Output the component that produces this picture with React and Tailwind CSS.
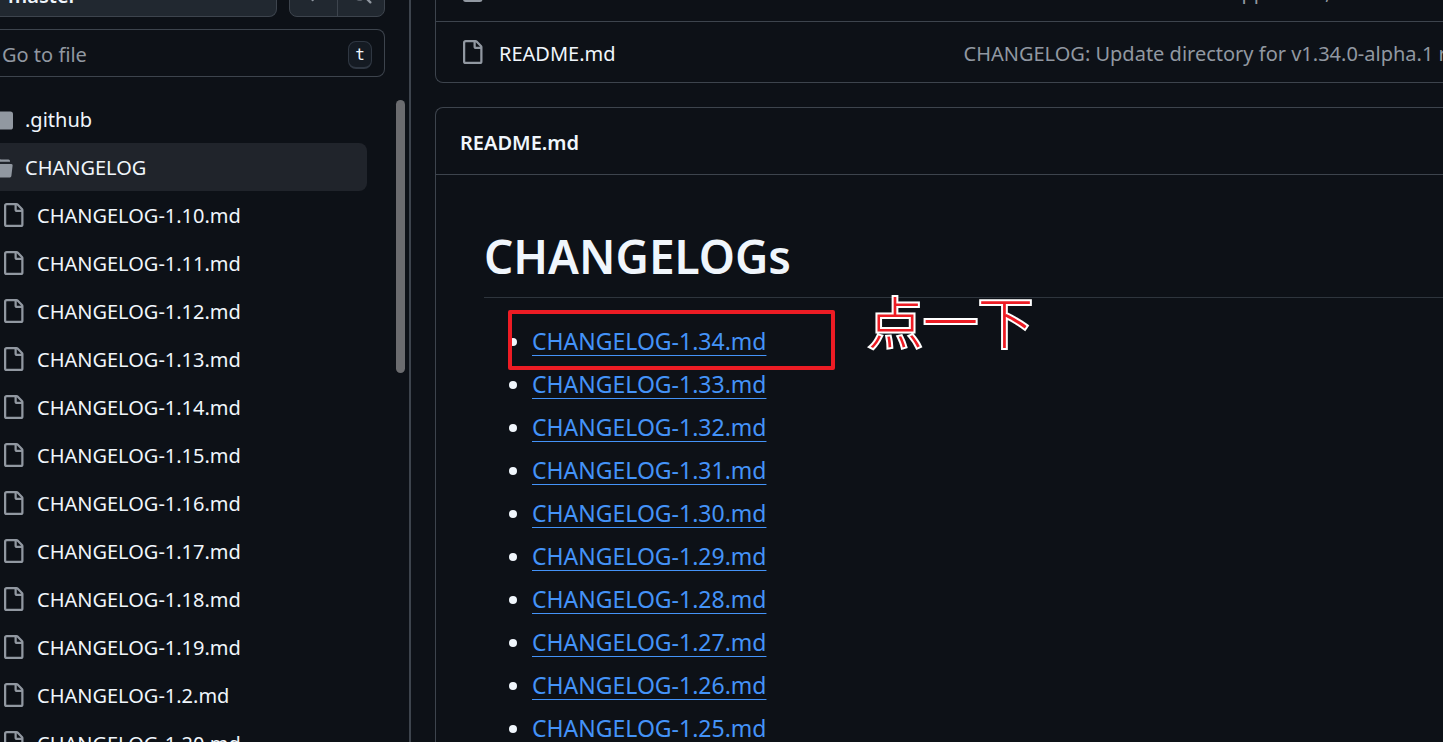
import React from 'react';

const treeFiles = [
  'CHANGELOG-1.10.md',
  'CHANGELOG-1.11.md',
  'CHANGELOG-1.12.md',
  'CHANGELOG-1.13.md',
  'CHANGELOG-1.14.md',
  'CHANGELOG-1.15.md',
  'CHANGELOG-1.16.md',
  'CHANGELOG-1.17.md',
  'CHANGELOG-1.18.md',
  'CHANGELOG-1.19.md',
  'CHANGELOG-1.2.md',
  'CHANGELOG-1.20.md',
];

const readmeLinks = [
  'CHANGELOG-1.34.md',
  'CHANGELOG-1.33.md',
  'CHANGELOG-1.32.md',
  'CHANGELOG-1.31.md',
  'CHANGELOG-1.30.md',
  'CHANGELOG-1.29.md',
  'CHANGELOG-1.28.md',
  'CHANGELOG-1.27.md',
  'CHANGELOG-1.26.md',
  'CHANGELOG-1.25.md',
];

const directoryRows = [
  { name: 'OWNERS', message: 'Move inactive release leads. approvers, reviewers' },
  { name: 'README.md', message: 'CHANGELOG: Update directory for v1.34.0-alpha.1 release' },
];

const Icon = ({ d }) => (
  <svg viewBox="0 0 16 16" className="size-6 shrink-0 fill-[#9198a1]" aria-hidden="true">
    <path d={d} />
  </svg>
);

const FileIcon = () => (
  <Icon d="M2 1.75C2 .784 2.784 0 3.75 0h6.586c.464 0 .909.184 1.237.513l2.914 2.914c.329.328.513.773.513 1.237v9.586A1.75 1.75 0 0 1 13.25 16h-9.5A1.75 1.75 0 0 1 2 14.25Zm1.75-.25a.25.25 0 0 0-.25.25v12.5c0 .138.112.25.25.25h9.5a.25.25 0 0 0 .25-.25V6h-2.75A1.75 1.75 0 0 1 9 4.25V1.5Zm6.75.062V4.25c0 .138.112.25.25.25h2.688l-.011-.013-2.914-2.914-.013-.011Z" />
);

const FolderIcon = () => (
  <Icon d="M1.75 1A1.75 1.75 0 0 0 0 2.75v10.5C0 14.216.784 15 1.75 15h12.5A1.75 1.75 0 0 0 16 13.25v-8.5A1.75 1.75 0 0 0 14.25 3H7.5a.25.25 0 0 1-.2-.1l-.9-1.2C6.07 1.26 5.55 1 5 1H1.75Z" />
);

const OpenFolderIcon = () => (
  <Icon d="M.513 1.513A1.75 1.75 0 0 1 1.75 1h3.5c.55 0 1.07.26 1.4.7l.9 1.2a.25.25 0 0 0 .2.1H13a1 1 0 0 1 1 1v.5H2.75a.75.75 0 0 0 0 1.5h11.978a1 1 0 0 1 .994 1.117L15 13.25A1.75 1.75 0 0 1 13.25 15H1.75A1.75 1.75 0 0 1 0 13.25V2.75c0-.464.184-.91.513-1.237Z" />
);

const PlusIcon = () => (
  <Icon d="M7.75 2a.75.75 0 0 1 .75.75V7h4.25a.75.75 0 0 1 0 1.5H8.5v4.25a.75.75 0 0 1-1.5 0V8.5H2.75a.75.75 0 0 1 0-1.5H7V2.75A.75.75 0 0 1 7.75 2Z" />
);

const SearchIcon = () => (
  <Icon d="M10.68 11.74a6 6 0 0 1-7.922-8.982 6 6 0 0 1 8.982 7.922l3.04 3.04a.749.749 0 0 1-.326 1.275.749.749 0 0 1-.734-.215ZM11.5 7a4.499 4.499 0 1 0-8.997 0A4.499 4.499 0 0 0 11.5 7Z" />
);

const Sidebar = () => (
  <aside className="relative w-[411px] shrink-0 overflow-hidden border-r-2 border-[#3d444d]">
    <div className="-mt-8 pr-6">
      {/* Branch picker and tree actions */}
      <div className="flex gap-3">
        <button
          type="button"
          className="h-[49px] flex-1 rounded-r-lg border border-l-0 border-[#3d444d] bg-[#212830] pt-1.5 pl-2 text-left font-semibold"
        >
          master
        </button>
        <div className="flex h-[49px] w-24 divide-x divide-[#3d444d] overflow-hidden rounded-lg border border-[#3d444d] bg-[#212830]">
          <button type="button" aria-label="Add file" className="flex flex-1 items-center justify-center">
            <PlusIcon />
          </button>
          <button type="button" aria-label="Search this repository" className="flex flex-1 items-center justify-center">
            <SearchIcon />
          </button>
        </div>
      </div>

      {/* File filter */}
      <div className="mt-3 flex h-12 items-center rounded-r-lg border border-l-0 border-[#3d444d] pt-1 pr-3">
        <input
          type="text"
          aria-label="Go to file"
          placeholder="Go to file"
          className="min-w-0 flex-1 bg-transparent pl-0.5 outline-none placeholder:text-[#9198a1]"
        />
        <kbd className="flex h-7 w-6 items-center justify-center rounded-lg border border-b-2 border-[#2f3742] bg-[#151b23] font-['DejaVu_Sans_Mono',monospace] text-base">
          t
        </kbd>
      </div>
    </div>

    {/* File tree */}
    <ul className="-ml-[11px] mt-[18px] mr-[42px]">
      <li className="flex h-12 items-center gap-3">
        <FolderIcon />
        <span className="pt-0.5">.github</span>
      </li>
      <li>
        <div className="flex h-12 items-center gap-3 rounded-lg bg-[#20242b]">
          <OpenFolderIcon />
          <span className="pt-0.5">CHANGELOG</span>
        </div>
        <ul className="pl-3">
          {treeFiles.map((name) => (
            <li key={name} className="flex h-12 items-center gap-3">
              <FileIcon />
              <span className="pt-0.5">{name}</span>
            </li>
          ))}
        </ul>
      </li>
    </ul>

    {/* Scrollbar thumb */}
    <div className="absolute top-[100px] right-1 h-[273px] w-[9px] rounded-full bg-[#6b6c6f]" />
  </aside>
);

const DirectoryTable = () => (
  <div className="-mt-10 rounded-bl-lg border-b border-l border-[#3d444d]">
    <table className="w-full table-fixed">
      <tbody className="divide-y divide-[#3d444d]">
        {directoryRows.map((row) => (
          <tr key={row.name} className="h-[61px]">
            <td className="w-1/2 px-6">
              <div className="flex items-center gap-[15px]">
                <FileIcon />
                <span className="pt-1">{row.name}</span>
              </div>
            </td>
            <td className="overflow-hidden pt-1 pl-6 whitespace-nowrap text-[#9198a1]">{row.message}</td>
          </tr>
        ))}
      </tbody>
    </table>
  </div>
);

const Readme = () => (
  <section className="mt-6 rounded-tl-lg border-t border-l border-[#3d444d]">
    <h2 className="flex h-[67px] items-center border-b border-[#3d444d] px-6 pt-1 font-semibold">README.md</h2>
    <article className="py-12 pl-12">
      <h1 className="border-b border-[#2e353d] pb-2 text-[46px] leading-[66px] font-semibold">CHANGELOGs</h1>
      <div className="relative mt-[25px]">
        <ul className="list-disc space-y-[7px] pl-12 text-[23px] leading-9">
          {readmeLinks.map((name) => (
            <li key={name}>
              <a href={`#${name}`} className="text-[#4493f8] underline decoration-1 underline-offset-[5px]">
                {name}
              </a>
            </li>
          ))}
        </ul>

        {/* Highlight box and note over the first entry */}
        <div className="absolute -top-[13px] left-6 h-[60px] w-[327px] rounded-xs border-4 border-[#ed1c24]" />
        <div className="absolute -top-10 left-96 font-['Noto_Sans_CJK_SC',sans-serif] text-[55px] leading-[72px] font-light text-[#ed1c24] [-webkit-text-stroke:4px_white] [paint-order:stroke]">
          点一下
        </div>
      </div>
    </article>
  </section>
);

const App = () => (
  <div className="flex h-screen overflow-hidden bg-[#0d1117] font-['Noto_Sans',sans-serif] text-xl text-[#f0f6fc]">
    <Sidebar />
    <main className="min-w-0 flex-1 overflow-hidden pl-6">
      <DirectoryTable />
      <Readme />
    </main>
  </div>
);

export default App;
